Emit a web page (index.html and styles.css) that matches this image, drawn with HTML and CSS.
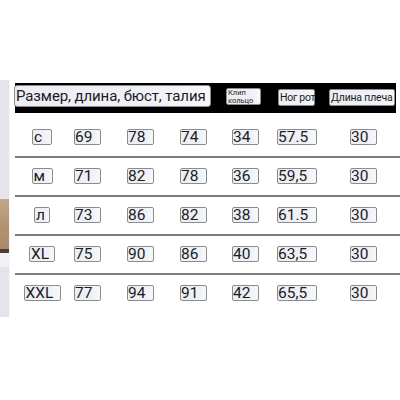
FILE: index.html
```html
<!DOCTYPE html>
<html lang="ru">
<head>
<meta charset="utf-8">
<title>Размерная таблица</title>
<link rel="stylesheet" href="styles.css">
</head>
<body>
<div class="page">
  <div class="strip">
    <div class="strip-grey top"></div>
    <div class="strip-brown"></div>
    <div class="strip-dark"></div>
    <div class="strip-light"></div>
    <div class="strip-grey bottom"></div>
  </div>
  <div class="main">
    <div class="header">
      <span class="box hlabel">Размер, длина, бюст, талия</span>
      <span class="box hsmall">Клип<br>кольцо</span>
      <span class="box hmid hrot">Ног рот</span>
      <span class="box hmid hplecho">Длина плеча</span>
    </div>
    <div class="row first">
      <div class="cell size"><span class="box w20">с</span></div>
      <div class="cell c2"><span class="box w27">69</span></div>
      <div class="cell c3"><span class="box w27">78</span></div>
      <div class="cell c4"><span class="box w27">74</span></div>
      <div class="cell c5"><span class="box w27">34</span></div>
      <div class="cell c6"><span class="box w40">57.5</span></div>
      <div class="cell c7"><span class="box w27">30</span></div>
    </div>
    <div class="row">
      <div class="cell size"><span class="box w21">м</span></div>
      <div class="cell c2"><span class="box w27">71</span></div>
      <div class="cell c3"><span class="box w27">82</span></div>
      <div class="cell c4"><span class="box w27">78</span></div>
      <div class="cell c5"><span class="box w27">36</span></div>
      <div class="cell c6"><span class="box w40">59,5</span></div>
      <div class="cell c7"><span class="box w27">30</span></div>
    </div>
    <div class="row">
      <div class="cell size"><span class="box w16">л</span></div>
      <div class="cell c2"><span class="box w27">73</span></div>
      <div class="cell c3"><span class="box w27">86</span></div>
      <div class="cell c4"><span class="box w27">82</span></div>
      <div class="cell c5"><span class="box w27">38</span></div>
      <div class="cell c6"><span class="box w40">61.5</span></div>
      <div class="cell c7"><span class="box w27">30</span></div>
    </div>
    <div class="row">
      <div class="cell size"><span class="box w26">XL</span></div>
      <div class="cell c2"><span class="box w27">75</span></div>
      <div class="cell c3"><span class="box w27">90</span></div>
      <div class="cell c4"><span class="box w27">86</span></div>
      <div class="cell c5"><span class="box w27">40</span></div>
      <div class="cell c6"><span class="box w40">63,5</span></div>
      <div class="cell c7"><span class="box w27">30</span></div>
    </div>
    <div class="row last">
      <div class="cell size"><span class="box w37">XXL</span></div>
      <div class="cell c2"><span class="box w27">77</span></div>
      <div class="cell c3"><span class="box w27">94</span></div>
      <div class="cell c4"><span class="box w27">91</span></div>
      <div class="cell c5"><span class="box w27">42</span></div>
      <div class="cell c6"><span class="box w40">65,5</span></div>
      <div class="cell c7"><span class="box w27">30</span></div>
    </div>
  </div>
</div>
</body>
</html>
```
FILE: styles.css
```css
html, body {
  margin: 0;
  padding: 0;
  background: #ffffff;
}
body {
  font-family: Roboto, "Noto Sans", "DejaVu Sans", sans-serif;
  color: #1c1c1c;
  width: 400px;
  height: 400px;
  overflow: hidden;
}
.page {
  display: flex;
  margin-top: 80px;
}
.strip {
  width: 10px;
  display: flex;
  flex-direction: column;
  border-right: 1px solid #f6f6f8;
  box-sizing: border-box;
}
.strip-grey { background: #e4e5ea; }
.strip-grey.top { height: 119px; }
.strip-grey.bottom { height: 50px; }
.strip-brown {
  height: 50px;
  background: linear-gradient(180deg, #c2a889 0%, #b39371 50%, #a88a6a 100%);
}
.strip-dark { height: 4px; background: #4e3c2e; }
.strip-light { height: 14px; background: #f1f1f3; }

.main {
  margin-left: 5px;
  width: 385px;
  padding-top: 3px;
}
.header {
  height: 30px;
  margin-right: 4px;
  background: #000;
  display: flex;
  align-items: flex-start;
}
.box {
  display: inline-block;
  box-sizing: border-box;
  height: 16px;
  line-height: 14px;
  font-size: 15.5px;
  padding-left: 0;
  border: 1px solid #8b8b8b;
  border-radius: 2px;
  background: linear-gradient(90deg, #eceef4 0%, #eff1f6 70%, #f7f8fb 100%);
  white-space: nowrap;
}
.hlabel {
  margin-left: -1px;
  margin-top: 2px;
  width: 197px;
  height: 22px;
  line-height: 20px;
  font-size: 15px;
  letter-spacing: -0.1px;
  padding-left: 1px;
  border-radius: 3px;
}
.hsmall {
  margin-left: 15px;
  margin-top: 5px;
  width: 35px;
  height: 17px;
  font-size: 7.5px;
  line-height: 7.5px;
  padding: 0 0 0 1px;
  white-space: normal;
}
.hmid {
  margin-top: 6px;
  height: 17px;
  line-height: 15px;
  font-size: 10.5px;
  padding-left: 1px;
}
.hrot {
  margin-left: 17px;
  width: 37px;
  letter-spacing: -0.3px;
}
.hplecho {
  margin-left: 14px;
  width: 66px;
  letter-spacing: -0.2px;
}

.row {
  display: grid;
  grid-template-columns: 52px 53px 53px 52px 45px 73px 57px;
  padding: 10px 0 11px 1px;
  border-bottom: 2px solid #7c7c7c;
}
.row.first { padding-top: 16px; }
.row.last { border-bottom: none; }
.cell {
  height: 16px;
  display: flex;
}
.cell.size { justify-content: center; }
.cell.c2, .cell.c3, .cell.c4, .cell.c5, .cell.c6, .cell.c7 { padding-left: 6px; }
.cell.size .box { padding-left: 1px; }
.w16 { width: 16px; }
.w20 { width: 20px; }
.w21 { width: 21px; }
.w26 { width: 26px; }
.w27 { width: 27px; }
.w37 { width: 37px; }
.w40 { width: 40px; }
```
